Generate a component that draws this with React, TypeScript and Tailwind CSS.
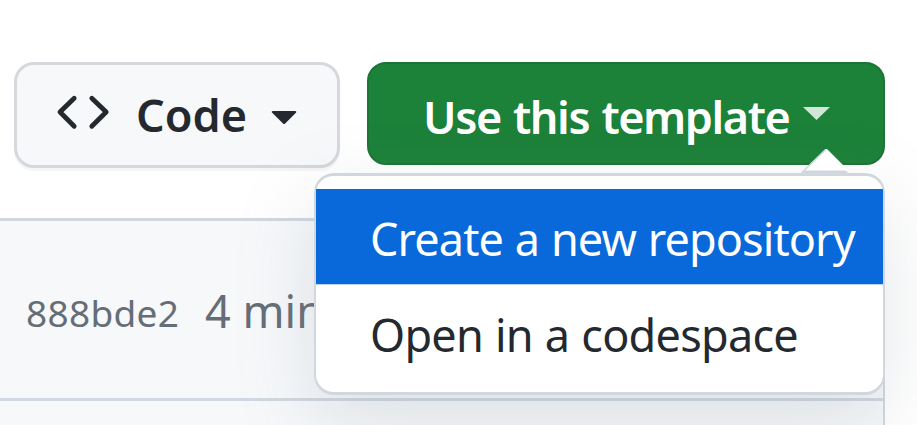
import React from "react";

function CodeButton() {
  return (
    <button className="flex h-[106px] w-[326px] items-start rounded-[20px] border-[3px] border-[#d5d8dc] bg-[#f6f8fa] pl-[39px] text-[#24292f] shadow-[0_3px_0_rgba(31,35,40,0.04)]">
      <svg className="mt-[28px] h-[38px] w-[54px] shrink-0" viewBox="0 0 54 38" fill="none" stroke="currentColor" strokeWidth="4.8" strokeLinecap="round" strokeLinejoin="round">
        <path d="M18.2 5.2 4 19 18.2 33.2M35.8 5.2 50.2 19 35.8 33.2" />
      </svg>
      <span className="ml-[26px] mt-[20px] w-[112px] text-left text-[45px] font-[560] leading-[60px]">Code</span>
      <svg className="ml-[23px] mt-[46px] h-[14px] w-[26px] shrink-0" viewBox="0 0 26 14" fill="currentColor">
        <path d="M2 0h22c1.3 0 1.7 1 .9 1.8L14.2 12.4a1.5 1.5 0 0 1-2.2 0L1.2 1.8C.3 1 .8 0 2 0Z" />
      </svg>
    </button>
  );
}

function TemplateButton() {
  return (
    <button className="flex h-[103px] w-[518px] items-start rounded-[19px] border-[2px] border-[#1c7435] bg-[#1c8139] pl-[54px] text-white">
      <span className="mt-[23px] w-[368px] whitespace-nowrap text-left text-[45px] font-semibold leading-[60px] tracking-[-1.45px] [word-spacing:2px]">Use this template</span>
      <svg className="ml-[12px] mt-[43px] h-[13px] w-[27px] shrink-0" viewBox="0 0 27 13">
        <path d="M0 0h27L13.5 13Z" fill="#d2e6d7" />
      </svg>
    </button>
  );
}

function Menu() {
  return (
    <div className="absolute left-[314px] top-[173px] h-[222px] w-[571px] rounded-[20px] border-x-[2px] border-y-[3px] border-[#d0d7de] bg-white pt-[13px] text-[45px] shadow-[0_26px_77px_rgba(140,149,159,0.23)]">
      <svg className="absolute left-[484px] top-[-28px] h-[28px] w-[52px]" viewBox="0 0 52 28">
        <path d="M1 25 25.5 1 27 1 48 22 44 25Z" fill="#fff" />
        <path d="M1.5 25 25.5 1.8" fill="none" stroke="#d0d7de" strokeWidth="1.5" />
        <path d="M5 22.5h40l2 1 2 3.5H0Z" fill="#d0d7de" />
      </svg>
      <div className="h-[95px] bg-[#0969da] pl-[54px] pt-[20px] leading-[60px] tracking-[-0.9px] [word-spacing:1px] whitespace-nowrap text-white">Create a new repository</div>
      <div className="h-[96px] border-t border-[#b5d2f4] pl-[54px] pt-[20px] leading-[60px] tracking-[-0.75px] [word-spacing:1px] whitespace-nowrap text-[#24292f]">Open in a codespace</div>
    </div>
  );
}

export default function App() {
  return (
    <main className="relative h-[425px] w-[917px] overflow-hidden bg-white font-['Noto_Sans',sans-serif]">
      <header className="flex h-[218px] items-start gap-[27px] pl-[14px] pt-[62px]">
        <CodeButton />
        <TemplateButton />
      </header>
      <section className="w-[885px] border-r-[2px] border-t-[3px] border-[#d0d7de] bg-[#f6f8fa] text-[#656d76]">
        <div className="flex h-[180px] items-start whitespace-nowrap border-b-[3px] border-[#d0d7de] pl-[26px]">
          <span className="mt-[62px] w-[179px] text-[37px] leading-[60px] tracking-[0.3px]">888bde2</span>
          <span className="mt-[60px] text-[45px] leading-[60px]">4 min</span>
        </div>
        <div className="h-[30px]" />
      </section>
      <Menu />
    </main>
  );
}
